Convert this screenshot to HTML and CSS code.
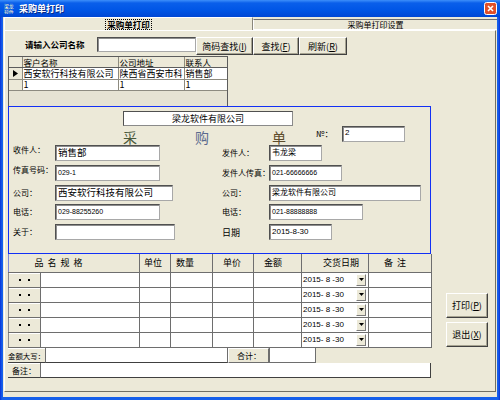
FILE: index.html
```html
<!DOCTYPE html>
<html lang="zh">
<head>
<meta charset="utf-8">
<title>采购单打印</title>
<link rel="stylesheet" href="styles.css">
</head>
<body>
<div class="win">
  <div class="titlebar">
    <div class="appicon"><span>梁龙</span><span>软件</span></div>
    <div class="title">采购单打印</div>
    <div class="close">
      <svg width="13" height="13" viewBox="0 0 13 13"><rect x="0.5" y="0.5" width="12" height="12" rx="2" fill="#e0502a" stroke="#fff"/><path d="M4 4 L9 9 M9 4 L4 9" stroke="#fff" stroke-width="1.6"/></svg>
    </div>
  </div>
  <div class="client">
    <div class="tabs">
      <div class="tab active"><span class="focus">采购单打印</span></div>
      <div class="tab inactive">采购单打印设置</div>
    </div>
    <div class="panel">
      <div class="search">
        <span class="slabel">请输入公司名称</span>
        <div class="field sfield"></div>
        <div class="btn b57">简码查找(<u>I</u>)</div>
        <div class="btn b46">查找(<u>F</u>)</div>
        <div class="btn b48">刷新(<u>R</u>)</div>
      </div>
      <div class="clist">
        <table>
          <colgroup><col class="c13"><col class="c96"><col class="c66"><col class="c44"></colgroup>
          <tr class="ch"><th></th><th>客户名称</th><th>公司地址</th><th>联系人</th></tr>
          <tr class="r1"><td class="ind"><svg width="5" height="7" viewBox="0 0 5 7"><path d="M0 0 L5 3.5 L0 7 Z" fill="#000"/></svg></td><td>西安软行科技有限公司</td><td>陕西省西安市科</td><td>销售部</td></tr>
          <tr class="r2"><td class="ind"></td><td>1</td><td>1</td><td>1</td></tr>
        </table>
      </div>
      <div class="sheet">
        <div class="cotitle">梁龙软件有限公司</div>
        <div class="headline">
          <span class="big k1">采</span>
          <span class="big k2">购</span>
          <span class="big k3">单</span>
          <span class="no">№：</span>
          <div class="field nobox">2</div>
        </div>
        <div class="fields">
          <span class="lab up">收件人：</span><div class="field w105 t10">销售部</div>
          <span class="lab">发件人：</span><div class="field w53 t8">韦龙梁</div>

          <span class="lab up">传真号码：</span><div class="field w105 num">029-1</div>
          <span class="lab">发件人传真：</span><div class="field w73 num">021-66666666</div>

          <span class="lab">公司：</span><div class="field w118 t10">西安软行科技有限公司</div>
          <span class="lab">公司：</span><div class="field w152 t8">梁龙软件有限公司</div>

          <span class="lab">电话：</span><div class="field w105 num">029-88255260</div>
          <span class="lab">电话：</span><div class="field w94 num">021-88888888</div>

          <span class="lab">关于：</span><div class="field w120"></div>
          <span class="lab l9">日期</span><div class="field w63 date">2015-8-30</div>
        </div>
      </div>
      <div class="lower">
        <div class="lower-main">
          <table class="detail">
            <colgroup><col class="d32"><col class="d99"><col class="d31"><col class="d42"><col class="d41"><col class="d48"><col class="d67"><col class="d63"></colgroup>
            <tr class="dh">
              <th colspan="2" class="hc">品 名 规 格</th><th class="p4">单位</th><th class="p5">数量</th><th class="p10">单价</th><th class="p10">金额</th><th class="p21">交货日期</th><th class="p15">备 &nbsp;注</th>
            </tr>
            <tr><td class="rh"><span class="dots"></span></td><td></td><td></td><td></td><td></td><td></td><td class="dt"><div class="dcell"><span>2015- 8 -30</span><span class="dd"><svg width="5" height="3" viewBox="0 0 5 3"><path d="M0 0 H5 L2.5 3 Z" fill="#000"/></svg></span></div></td><td></td></tr>
            <tr><td class="rh"><span class="dots"></span></td><td></td><td></td><td></td><td></td><td></td><td class="dt"><div class="dcell"><span>2015- 8 -30</span><span class="dd"><svg width="5" height="3" viewBox="0 0 5 3"><path d="M0 0 H5 L2.5 3 Z" fill="#000"/></svg></span></div></td><td></td></tr>
            <tr><td class="rh"><span class="dots"></span></td><td></td><td></td><td></td><td></td><td></td><td class="dt"><div class="dcell"><span>2015- 8 -30</span><span class="dd"><svg width="5" height="3" viewBox="0 0 5 3"><path d="M0 0 H5 L2.5 3 Z" fill="#000"/></svg></span></div></td><td></td></tr>
            <tr><td class="rh"><span class="dots"></span></td><td></td><td></td><td></td><td></td><td></td><td class="dt"><div class="dcell"><span>2015- 8 -30</span><span class="dd"><svg width="5" height="3" viewBox="0 0 5 3"><path d="M0 0 H5 L2.5 3 Z" fill="#000"/></svg></span></div></td><td></td></tr>
            <tr><td class="rh"><span class="dots"></span></td><td></td><td></td><td></td><td></td><td></td><td class="dt"><div class="dcell"><span>2015- 8 -30</span><span class="dd"><svg width="5" height="3" viewBox="0 0 5 3"><path d="M0 0 H5 L2.5 3 Z" fill="#000"/></svg></span></div></td><td></td></tr>
          </table>
          <div class="sumrow">
            <div class="flabel fl37">金额大写：</div>
            <div class="fin w182"></div>
            <div class="btn sumbtn">合计：</div>
            <div class="fin w47 boxed"></div>
          </div>
          <div class="noterow">
            <div class="flabel fl32">备注：</div>
            <div class="fin w391"></div>
          </div>
        </div>
        <div class="sidebtns">
          <div class="btn sbtn">打印(<u>P</u>)</div>
          <div class="btn sbtn">退出(<u>X</u>)</div>
        </div>
      </div>
    </div>
  </div>
</div>
</body>
</html>
```

FILE: styles.css
```css
* { box-sizing: border-box; margin: 0; padding: 0; }
html, body { width: 500px; height: 400px; overflow: hidden; }
body {
  font-family: "Noto Sans CJK SC", "Noto Sans", sans-serif;
  font-size: 9px;
  line-height: 11px;
  color: #000;
  background: #0a4fdc;
}
u { text-decoration: underline; }

.win {
  width: 500px; height: 400px;
  display: flex; flex-direction: column;
  background: linear-gradient(90deg, #0831d9 0, #1660ea 2px, #1660ea 498px, #0831d9 500px);
}

/* title bar */
.titlebar {
  height: 17px;
  display: flex; align-items: center;
  padding: 0 3px 0 4px;
  background: linear-gradient(#3d8ffa 0, #0a5fea 3px, #0056e6 10px, #0047d4 17px);
}
.appicon {
  width: 11px; height: 11px;
  display: flex; flex-direction: column;
  font-size: 5px; line-height: 5.5px; letter-spacing: -0.3px;
  color: #fff6c8; overflow: hidden;
}
.title {
  margin-left: 4px;
  color: #fff; font-weight: bold; font-size: 9px; line-height: 11px;
  text-shadow: 1px 1px 0 #0a2a86;
}
.close { margin-left: auto; width: 13px; height: 13px; display: flex; }

/* client */
.client {
  flex: 1;
  margin: 0 3px 3px;
  background: #ece9d8;
  display: flex; flex-direction: column;
}
.tabs { display: flex; height: 13px; padding-left: 1px; }
.tab { display: flex; align-items: center; justify-content: center; }
.tab.active {
  width: 249px;
  border-top: 1px solid #fff; border-left: 1px solid #fff; border-right: 1px solid #8a877c;
  font-weight: bold; font-size: 8.5px;
}
.tab.active .focus { outline: 1px dotted #000; line-height: 9px; padding: 0 1px; }
.tab.inactive {
  width: 244px; margin-top: 2px;
  border-top: 1px solid #6f6f6f; border-left: 1px solid #fff; border-bottom: 1px solid #fff;
  font-size: 8px; line-height: 9px;
}

.panel {
  width: 492px; height: 362px; margin-left: 1px;
  border: 1px solid; border-color: #fff #716f64 #716f64 #fff;
  padding: 6px 0 0 3px;
}

/* search */
.search { display: flex; align-items: flex-start; height: 18px; }
.slabel { margin-left: 17px; width: 72px; font-weight: bold; font-size: 8.5px; line-height: 15px; }
.sfield { width: 99px; height: 15px; }
.btn {
  background: #ece9d8;
  border: 1px solid; border-color: #fff #404040 #404040 #fff;
  box-shadow: inset -1px -1px 0 #a7a492;
  display: flex; align-items: center; justify-content: center;
  font-size: 9px; line-height: 11px; white-space: nowrap;
}
.b57 { width: 57px; height: 18px; }
.b46 { width: 46px; height: 18px; }
.b48 { width: 48px; height: 18px; }

.field {
  background: #fff;
  border: 1px solid; border-color: #505050 #a8a8a8 #a8a8a8 #505050;
  box-shadow: inset 1px 1px 0 #8e8e8e;
  white-space: nowrap; overflow: hidden;
  padding: 1px 0 0 2px;
  font-size: 9px; line-height: 11px;
}

/* customer list */
.clist {
  width: 220px; height: 50px; margin-top: 1px;
  background: #e6e3d3;
  border-top: 1px solid #5c5c5c; border-left: 1px solid #5c5c5c; border-right: 1px solid #5c5c5c;
  overflow: hidden;
}
.clist table { border-collapse: collapse; table-layout: fixed; width: 219px; }
.c13 { width: 13px; } .c96 { width: 96px; } .c66 { width: 66px; } .c44 { width: 44px; }
.clist th, .clist td {
  border: 1px solid #8d8b80; border-top: none;
  padding: 0 0 0 1px; overflow: hidden; white-space: nowrap;
  font-weight: normal; text-align: left; font-size: 9px;
}
.clist th:first-child, .clist td:first-child { border-left: none; }
.clist .ch th { height: 10px; line-height: 9px; font-size: 8.5px; vertical-align: bottom; background: #ece9d8; border-bottom-color: #5c5c5c; }
.clist .r1 td { height: 11px; line-height: 11px; background: #fff; }
.clist .r2 td { height: 10px; line-height: 10px; background: #fff; }
.clist td.ind { background: #ece9d8; padding: 0 0 0 4px; }
.clist td.ind svg { display: block; }

/* sheet */
.sheet {
  width: 423px; height: 148px;
  border: 1px solid #1230f5;
}
.cotitle {
  margin: 4px 0 0 114px; width: 170px; height: 15px;
  background: #fff;
  border: 1px solid; border-color: #505050 #8a8a8a #8a8a8a #505050;
  text-align: center; font-size: 9px; line-height: 13px;
}
.headline { display: flex; align-items: flex-start; height: 19px; padding-left: 114px; }
.big { font-size: 14px; line-height: 14px; padding-top: 4px; }
.k1 { width: 72px; color: #48583a; }
.k2 { width: 77px; color: #5a6a8e; }
.k3 { width: 44px; color: #5d4c2c; }
.no { width: 26px; font-size: 8.5px; line-height: 11px; padding-top: 2px; }
.nobox { width: 63px; height: 16px; font-size: 8px; line-height: 9px; font-family: "Liberation Sans", sans-serif; }

.fields {
  display: grid;
  grid-template-columns: 42px 167px 47px 1fr;
  grid-auto-rows: 19.8px;
  padding-left: 4px;
}
.lab { font-size: 8px; line-height: 16px; white-space: nowrap; }
.lab.up { line-height: 9px; }
.lab.l9 { font-size: 9px; line-height: 17px; }
.fields .field { height: 16px; }
.w105 { width: 105px; } .w118 { width: 118px; } .w120 { width: 120px; }
.w53 { width: 53px; } .w73 { width: 73px; } .w152 { width: 152px; }
.w94 { width: 94px; } .w63 { width: 63px; }
.t10 { font-size: 9.5px; line-height: 11px; padding-top: 1px; }
.t8 { font-size: 8px; line-height: 10px; }
.num { font-family: "Liberation Sans", sans-serif; font-size: 7px; line-height: 9px; padding-top: 2px; }
.date { font-family: "Liberation Sans", sans-serif; font-size: 8px; line-height: 11px; padding-top: 1px; }

/* lower */
.lower { display: flex; align-items: flex-start; }
.lower-main { width: 423px; }
.detail { border-collapse: collapse; table-layout: fixed; width: 423px; }
.d32 { width: 32px; } .d99 { width: 99px; } .d31 { width: 31px; } .d42 { width: 42px; }
.d41 { width: 41px; } .d48 { width: 48px; } .d67 { width: 67px; } .d63 { width: 63px; }
.detail th, .detail td { border: 1px solid #6e6e6e; padding: 0; overflow: hidden; white-space: nowrap; }
.detail th {
  height: 18px; border-top: none;
  background: #ece9d8; font-weight: normal; font-size: 9px; line-height: 11px; text-align: left;
}
.detail th.hc { text-align: center; padding-right: 30px; letter-spacing: 1px; border-left-color: #7a86d8; }
.p4 { padding-left: 4px !important; } .p5 { padding-left: 5px !important; }
.p10 { padding-left: 10px !important; } .p15 { padding-left: 15px !important; }
.p21 { padding-left: 21px !important; }
.detail td { height: 15px; background: #fff; }
.detail td.rh {
  background: #ece9d8;
  border-color: #fff #6e6e6e #6e6e6e #8a8a8a;
  box-shadow: inset 0 1px 0 #fff;
}
.dots { display: block; width: 2px; height: 2px; background: #000; box-shadow: 9px 0 0 #000; margin-left: 10px; }
.detail td.dt { padding: 1px 2px 1px 1px; }
.dcell { display: flex; align-items: center; justify-content: space-between; height: 12px; font-family: "Liberation Sans", sans-serif; font-size: 8px; line-height: 10px; white-space: pre; }
.dd {
  width: 10px; height: 12px;
  background: #ece9d8;
  border: 1px solid; border-color: #fff #7a7a7a #7a7a7a #fff;
  display: flex; align-items: center; justify-content: center;
}

.sumrow, .noterow { display: flex; height: 15px; }
.flabel {
  background: #ece9d8; white-space: nowrap;
  border-bottom: 1px solid #404040; border-top: 1px solid #fff;
  display: flex; align-items: center;
}
.fl37 { width: 37px; font-size: 7.4px; line-height: 13px; }
.fl32 { width: 32px; font-size: 8px; line-height: 13px; justify-content: center; }
.fin { background: #fff; height: 15px; border-left: 1px solid #6e6e6e; border-bottom: 1px solid #404040; }
.w182 { width: 183px; border-right: 1px solid #6e6e6e; }
.w47 { width: 47px; }
.boxed { border: 1px solid #6e6e6e; border-top: none; }
.w391 { width: 391px; border-right: 1px solid #404040; }
.sumbtn { width: 41px; height: 15px; font-size: 8px; justify-content: flex-start; padding-left: 8px; box-shadow: none; border-color: #fff #6e6e6e #6e6e6e #fff; }

.sidebtns { display: flex; flex-direction: column; gap: 4px; margin: 39px 0 0 15px; }
.sbtn { width: 42px; height: 25px; font-size: 9px; }
```
